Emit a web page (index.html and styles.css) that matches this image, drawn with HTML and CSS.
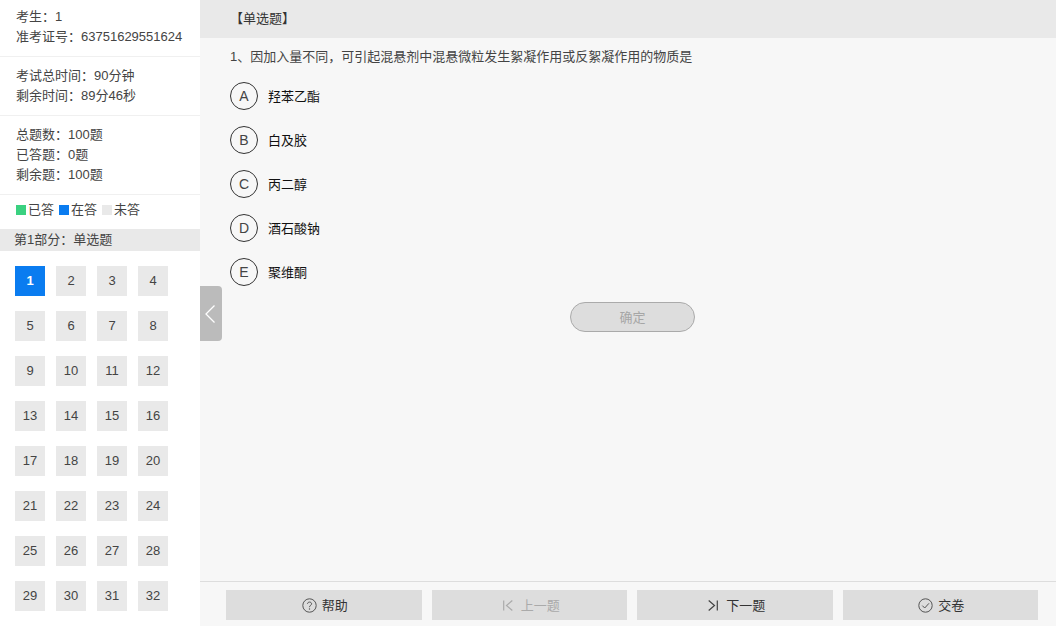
FILE: index.html
```html
<!DOCTYPE html>
<html lang="zh-CN">
<head>
<meta charset="utf-8">
<title>考试</title>
<link rel="stylesheet" href="styles.css">
</head>
<body>
<div class="app">
  <aside class="side">
    <section class="info">
      <p>考生：1</p>
      <p>准考证号：63751629551624</p>
    </section>
    <section class="info">
      <p>考试总时间：90分钟</p>
      <p>剩余时间：89分46秒</p>
    </section>
    <section class="info">
      <p>总题数：100题</p>
      <p>已答题：0题</p>
      <p>剩余题：100题</p>
    </section>
    <div class="legend">
      <span class="legend-item"><i class="dot dot-done"></i>已答</span>
      <span class="legend-item"><i class="dot dot-now"></i>在答</span>
      <span class="legend-item"><i class="dot dot-todo"></i>未答</span>
    </div>
    <div class="part">第1部分：单选题</div>
    <div class="grid">
      <a class="cell cell-active">1</a><a class="cell">2</a><a class="cell">3</a><a class="cell">4</a>
      <a class="cell">5</a><a class="cell">6</a><a class="cell">7</a><a class="cell">8</a>
      <a class="cell">9</a><a class="cell">10</a><a class="cell">11</a><a class="cell">12</a>
      <a class="cell">13</a><a class="cell">14</a><a class="cell">15</a><a class="cell">16</a>
      <a class="cell">17</a><a class="cell">18</a><a class="cell">19</a><a class="cell">20</a>
      <a class="cell">21</a><a class="cell">22</a><a class="cell">23</a><a class="cell">24</a>
      <a class="cell">25</a><a class="cell">26</a><a class="cell">27</a><a class="cell">28</a>
      <a class="cell">29</a><a class="cell">30</a><a class="cell">31</a><a class="cell">32</a>
    </div>
  </aside>
  <main class="main">
    <div class="toggle">
      <svg width="12" height="20" viewBox="0 0 12 20"><path d="M10.500 1.500 L2 10 L10.500 18.500" fill="none" stroke="#fff" stroke-width="1.300"/></svg>
    </div>
    <header class="head">【单选题】</header>
    <div class="content">
      <p class="question">1、因加入量不同，可引起混悬剂中混悬微粒发生絮凝作用或反絮凝作用的物质是</p>
      <ul class="options">
        <li class="option"><span class="letter">A</span><span class="option-text">羟苯乙酯</span></li>
        <li class="option"><span class="letter">B</span><span class="option-text">白及胶</span></li>
        <li class="option"><span class="letter">C</span><span class="option-text">丙二醇</span></li>
        <li class="option"><span class="letter">D</span><span class="option-text">酒石酸钠</span></li>
        <li class="option"><span class="letter">E</span><span class="option-text">聚维酮</span></li>
      </ul>
      <div class="confirm-row"><button class="confirm">确定</button></div>
    </div>
    <footer class="foot">
      <button class="btn">
        <svg class="ico" width="15" height="15" viewBox="0 0 15 15"><circle cx="7.500" cy="7.500" r="6.700" fill="none" stroke="#555"/><path d="M5.500 5.800 C5.500 3.500 9.600 3.500 9.600 5.800 C9.600 7.300 7.500 7.300 7.500 9.200" fill="none" stroke="#555"/><circle cx="7.500" cy="11" r=".7" fill="#555"/></svg>
        帮助
      </button>
      <button class="btn btn-off">
        <svg class="ico-step" width="10" height="11" viewBox="0 0 10 11"><path d="M.7 .5 V10.500 M9.300 .5 L3.500 5.500 L9.300 10.500" fill="none" stroke="#aaa" stroke-width="1.200"/></svg>
        上一题
      </button>
      <button class="btn">
        <svg class="ico-step" width="10" height="11" viewBox="0 0 10 11"><path d="M9.300 .5 V10.500 M.7 .5 L6.500 5.500 L.7 10.500" fill="none" stroke="#444" stroke-width="1.200"/></svg>
        下一题
      </button>
      <button class="btn">
        <svg class="ico" width="15" height="15" viewBox="0 0 15 15"><circle cx="7.500" cy="7.500" r="6.700" fill="none" stroke="#555"/><path d="M4.300 7.600 L6.700 10 L11 5.300" fill="none" stroke="#555"/></svg>
        交卷
      </button>
    </footer>
  </main>
</div>
</body>
</html>
```
FILE: styles.css
```css
* { box-sizing: border-box; }
html, body { margin: 0; height: 100%; }
body {
  font-family: "Liberation Sans", "Noto Sans CJK SC", sans-serif;
  font-size: 13px;
  color: #333;
  overflow: hidden;
}
p, ul { margin: 0; padding: 0; list-style: none; }
.app { display: flex; width: 1056px; height: 626px; }

.side { width: 200px; flex: none; background: #fff; }
.info { padding: 9px 16px; border-bottom: 1px solid #f0f0f0; line-height: 20px; color: #444; }
.info:first-child { padding-top: 7px; }
.legend { display: flex; gap: 5px; padding: 5px 16px 0; height: 34px; line-height: 20px; color: #444; }
.legend-item { display: flex; align-items: center; height: 20px; }
.dot { width: 10px; height: 10px; margin-right: 2px; }
.dot-done { background: #3ad180; }
.dot-now { background: #0a7cf0; }
.dot-todo { background: #e9e9e9; }
.part { height: 22px; line-height: 22px; padding-left: 14px; background: #e9e9e9; color: #444; }
.grid { display: grid; grid-template-columns: repeat(4, 30px); column-gap: 11px; row-gap: 15px; padding: 15px 0 0 15px; }
.cell { height: 30px; line-height: 30px; text-align: center; font-size: 13px; background: #e9e9e9; color: #444; }
.cell-active { background: #0a7cf0; color: #fff; font-weight: bold; }

.main { position: relative; flex: 1; display: flex; flex-direction: column; background: #f7f7f7; }
.toggle {
  position: absolute; left: 0; top: 286px; width: 22px; height: 55px;
  background: #bbb; border-radius: 0 4px 4px 0;
  display: flex; align-items: center; justify-content: center; padding-right: 2px;
}
.head { height: 38px; line-height: 37px; padding-left: 30px; background: #e9e9e9; font-size: 13px; color: #333; }
.content { flex: 1; padding: 9px 30px 0; }
.question { line-height: 20px; font-size: 13px; color: #444; }
.options { padding-top: 7px; }
.option { display: flex; align-items: center; gap: 10px; height: 44px; font-size: 13px; color: #111; }
.option-text { padding-bottom: 2px; }
.letter {
  width: 28px; height: 28px; border: 1px solid #333; border-radius: 50%;
  display: flex; align-items: center; justify-content: center;
  font-size: 14px; color: #444;
}
.confirm-row { display: flex; justify-content: center; padding-top: 8px; }
.confirm {
  width: 125px; height: 30px; margin-left: 9px; padding: 0 0 1px;
  border: 1px solid #aaa; border-radius: 15px;
  background: #ddd; color: #a6a6a6;
  font: 13px "Liberation Sans", "Noto Sans CJK SC", sans-serif;
}
.foot { height: 45px; border-top: 1px solid #ddd; padding: 8px 18px 0 26px; display: flex; gap: 10px; }
.btn {
  flex: 1; height: 30px; padding: 0 0 2px;
  display: flex; align-items: center; justify-content: center;
  border: 0; background: #ddd; color: #333;
  font: 13px "Liberation Sans", "Noto Sans CJK SC", sans-serif;
}
.btn-off { color: #aaa; }
.ico { margin: 2px 5px 0 2px; }
.ico-step { margin: 2px 8px 0 4px; }
```
